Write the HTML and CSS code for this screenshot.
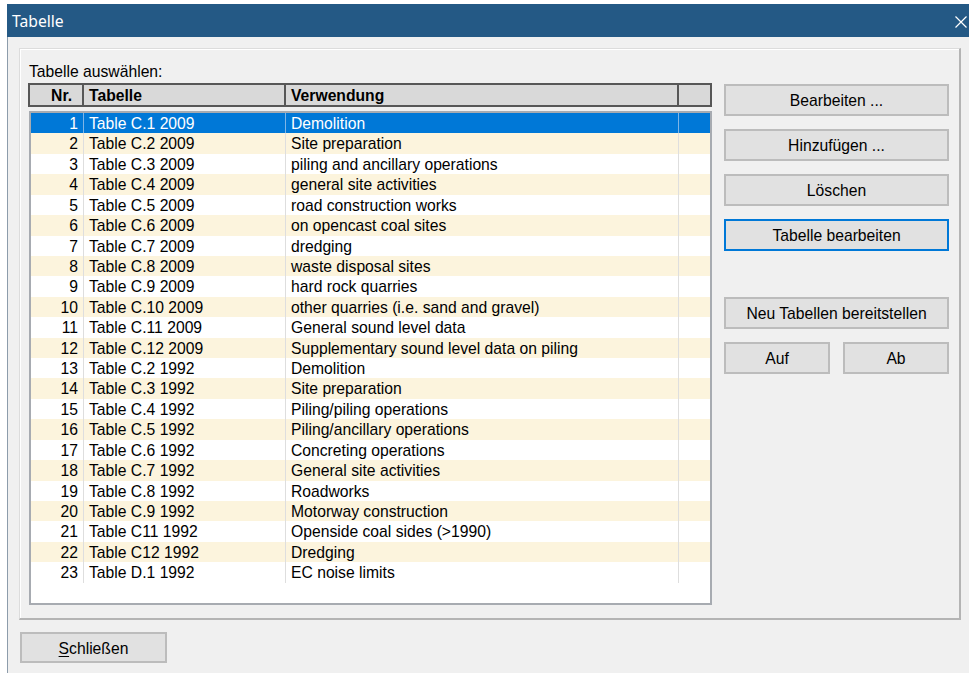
FILE: index.html
```html
<!DOCTYPE html>
<html lang="de">
<head>
<meta charset="utf-8">
<title>Tabelle</title>
<link rel="stylesheet" href="styles.css">
</head>
<body>
<div class="window">
  <div class="titlebar">
    <span class="title">Tabelle</span>
    <svg class="close" width="12" height="12" viewBox="0 0 12 12" aria-hidden="true">
      <path d="M0.5 0.5 L11.5 11.5 M11.5 0.5 L0.5 11.5" stroke="#fff" stroke-width="1.2" fill="none"/>
    </svg>
  </div>
  <div class="client">
    <div class="group">
      <div class="list-col">
        <div class="caption">Tabelle auswählen:</div>
        <div class="grid-head">
          <div class="hc num">Nr.</div>
          <div class="hc">Tabelle</div>
          <div class="hc">Verwendung</div>
          <div class="hc last"></div>
        </div>
        <div class="grid-body">
          <div class="row selected"><span class="c num">1</span><span class="c">Table C.1 2009</span><span class="c">Demolition</span><span class="c last"></span></div>
          <div class="row alt"><span class="c num">2</span><span class="c">Table C.2 2009</span><span class="c">Site preparation</span><span class="c last"></span></div>
          <div class="row"><span class="c num">3</span><span class="c">Table C.3 2009</span><span class="c">piling and ancillary operations</span><span class="c last"></span></div>
          <div class="row alt"><span class="c num">4</span><span class="c">Table C.4 2009</span><span class="c">general site activities</span><span class="c last"></span></div>
          <div class="row"><span class="c num">5</span><span class="c">Table C.5 2009</span><span class="c">road construction works</span><span class="c last"></span></div>
          <div class="row alt"><span class="c num">6</span><span class="c">Table C.6 2009</span><span class="c">on opencast coal sites</span><span class="c last"></span></div>
          <div class="row"><span class="c num">7</span><span class="c">Table C.7 2009</span><span class="c">dredging</span><span class="c last"></span></div>
          <div class="row alt"><span class="c num">8</span><span class="c">Table C.8 2009</span><span class="c">waste disposal sites</span><span class="c last"></span></div>
          <div class="row"><span class="c num">9</span><span class="c">Table C.9 2009</span><span class="c">hard rock quarries</span><span class="c last"></span></div>
          <div class="row alt"><span class="c num">10</span><span class="c">Table C.10 2009</span><span class="c">other quarries (i.e. sand and gravel)</span><span class="c last"></span></div>
          <div class="row"><span class="c num">11</span><span class="c">Table C.11 2009</span><span class="c">General sound level data</span><span class="c last"></span></div>
          <div class="row alt"><span class="c num">12</span><span class="c">Table C.12 2009</span><span class="c">Supplementary sound level data on piling</span><span class="c last"></span></div>
          <div class="row"><span class="c num">13</span><span class="c">Table C.2 1992</span><span class="c">Demolition</span><span class="c last"></span></div>
          <div class="row alt"><span class="c num">14</span><span class="c">Table C.3 1992</span><span class="c">Site preparation</span><span class="c last"></span></div>
          <div class="row"><span class="c num">15</span><span class="c">Table C.4 1992</span><span class="c">Piling/piling operations</span><span class="c last"></span></div>
          <div class="row alt"><span class="c num">16</span><span class="c">Table C.5 1992</span><span class="c">Piling/ancillary operations</span><span class="c last"></span></div>
          <div class="row"><span class="c num">17</span><span class="c">Table C.6 1992</span><span class="c">Concreting operations</span><span class="c last"></span></div>
          <div class="row alt"><span class="c num">18</span><span class="c">Table C.7 1992</span><span class="c">General site activities</span><span class="c last"></span></div>
          <div class="row"><span class="c num">19</span><span class="c">Table C.8 1992</span><span class="c">Roadworks</span><span class="c last"></span></div>
          <div class="row alt"><span class="c num">20</span><span class="c">Table C.9 1992</span><span class="c">Motorway construction</span><span class="c last"></span></div>
          <div class="row"><span class="c num">21</span><span class="c">Table C11 1992</span><span class="c">Openside coal sides (&gt;1990)</span><span class="c last"></span></div>
          <div class="row alt"><span class="c num">22</span><span class="c">Table C12 1992</span><span class="c">Dredging</span><span class="c last"></span></div>
          <div class="row"><span class="c num">23</span><span class="c">Table D.1 1992</span><span class="c">EC noise limits</span><span class="c last"></span></div>
        </div>
      </div>
      <div class="actions">
        <button class="btn">Bearbeiten ...</button>
        <button class="btn">Hinzufügen ...</button>
        <button class="btn">Löschen</button>
        <button class="btn default">Tabelle bearbeiten</button>
        <button class="btn spaced">Neu Tabellen bereitstellen</button>
        <div class="pair">
          <button class="btn">Auf</button>
          <button class="btn">Ab</button>
        </div>
      </div>
    </div>
    <div class="footer">
      <button class="btn close-btn"><u>S</u>chließen</button>
    </div>
  </div>
</div>
</body>
</html>
```

FILE: styles.css
```css
* { box-sizing: border-box; }

html, body {
  margin: 0;
  padding: 0;
  background: #ffffff;
}

body {
  font-family: "Liberation Sans", Arial, sans-serif;
  font-size: 15.7px;
  color: #000;
  overflow: hidden;
}

.window {
  margin: 4px 0 0 7px;
  width: 962px;
  height: 669px;
  display: flex;
  flex-direction: column;
}

.titlebar {
  height: 33px;
  flex: none;
  background: #245985;
  display: flex;
  align-items: center;
  justify-content: space-between;
  padding: 0 2px 0 5px;
}

.title {
  font-family: "Noto Sans", "Open Sans", sans-serif;
  font-size: 15.7px;
  color: #ffffff;
  line-height: 20px;
}

.close {
  display: block;
  margin-top: 2px;
}

.client {
  flex: 1;
  background: #f0f0f0;
  border-left: 1px solid #8d9cab;
  padding: 11px 8px 0 11px;
}

/* group frame around the list and its buttons */
.group {
  width: 942px;
  height: 572px;
  border: 1px solid #dcdcdc;
  border-right: 2px solid #b4b4b4;
  border-bottom: 2px solid #b4b4b4;
  box-shadow: inset 1px 1px 0 #ffffff;
  padding: 13px 0 0 8px;
  display: flex;
  gap: 12px;
}

.list-col {
  width: 684px;
  display: flex;
  flex-direction: column;
}

.caption {
  line-height: 18px;
  padding: 1px 0 0 1px;
  margin-bottom: 2px;
}

.grid-head {
  height: 24px;
  display: grid;
  grid-template-columns: 54px 202px 393px 1fr;
  background: #d9d9d9;
  border: 2px solid #575757;
  font-weight: bold;
}

.hc {
  line-height: 19px;
  padding: 1px 5px 0;
  border-right: 2px solid #575757;
  white-space: nowrap;
}

.hc.num {
  text-align: right;
  padding-right: 10px;
}

.hc.last { border-right: none; }

.grid-body {
  margin-top: 4px;
  margin-left: 1px;
  height: 494px;
  background: #ffffff;
  border: 2px solid #a7abb1;
}

.row {
  display: grid;
  grid-template-columns: 53px 202px 393px 1fr;
  height: 20.43px;
}

.row.alt { background: #fcf4dd; }

.row.selected {
  background: #0078d7;
  color: #ffffff;
}

.c {
  line-height: 19.43px;
  padding: 1px 5px 0;
  border-right: 1px solid #dedede;
  white-space: nowrap;
  overflow: hidden;
}

.c.num {
  text-align: right;
  padding-right: 5px;
}

.c.last { border-right: none; }

.row.selected .c { border-right-color: #7fb5e6; }
.row.selected .c.last { border-right: none; }

.actions {
  padding-top: 22px;
  width: 225px;
  display: flex;
  flex-direction: column;
  gap: 13px;
}

.btn {
  font-family: "Liberation Sans", Arial, sans-serif;
  font-size: 15.7px;
  color: #000;
  height: 32px;
  background: #e1e1e1;
  border: 2px solid #bcbcbc;
  border-radius: 0;
  padding: 2px 0 0;
  margin: 0;
}

.btn.default { border-color: #0078d7; }

.btn.spaced { margin-top: 33px; }

.pair {
  display: flex;
  gap: 13px;
}

.pair .btn { flex: 1; }

.footer {
  padding: 12px 0 0 1px;
}

.close-btn {
  width: 147px;
  height: 31px;
}

.close-btn u { text-decoration-thickness: 1px; text-underline-offset: 2px; }
```
